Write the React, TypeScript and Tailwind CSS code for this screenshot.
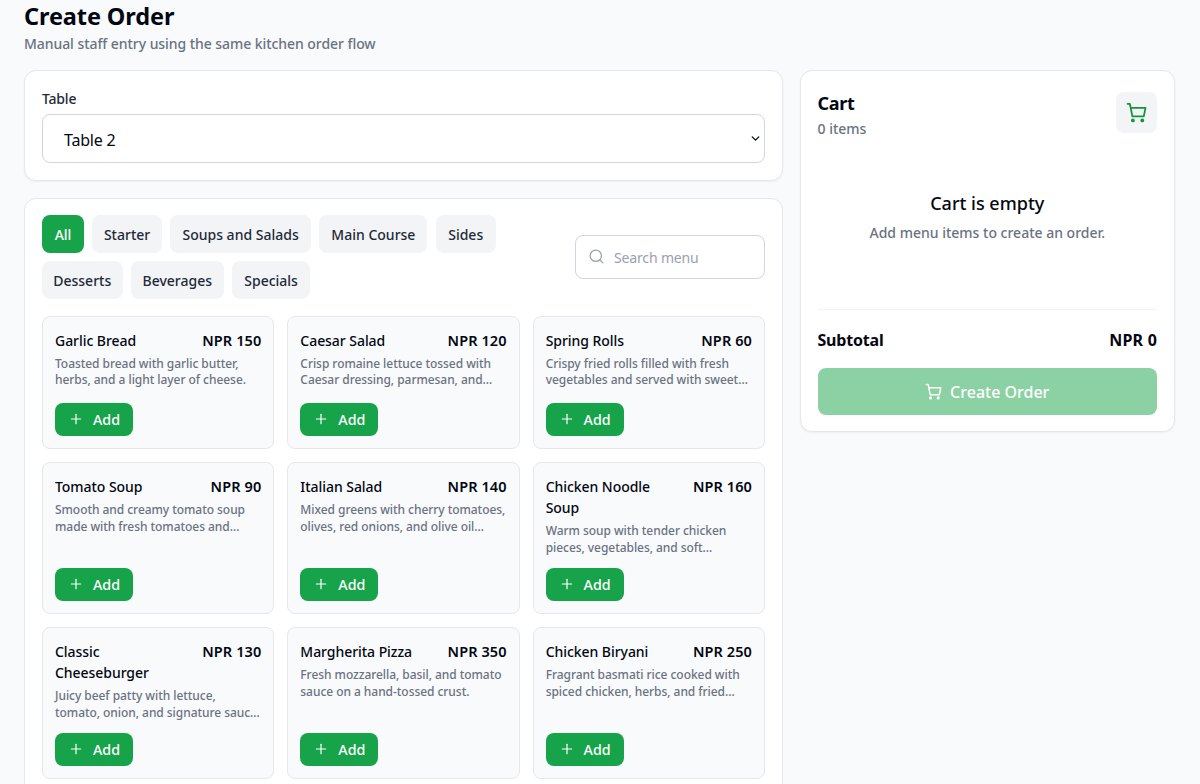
import React, { useState } from 'react';
import { ChevronDown, Plus, Search } from 'lucide-react';

type MenuItem = {
  name: string;
  price: number;
  description: string;
};

const CATEGORIES = [
  { name: 'All', width: 'w-[42px]' },
  { name: 'Starter', width: 'w-[69.5px]' },
  { name: 'Soups and Salads', width: 'w-[141px]' },
  { name: 'Main Course', width: 'w-[108px]' },
  { name: 'Sides', width: 'w-[60px]' },
  { name: 'Desserts', width: 'w-[80.5px]' },
  { name: 'Beverages', width: 'w-[93px]' },
  { name: 'Specials', width: 'w-[78px]' },
];

const MENU: MenuItem[] = [
  { name: 'Garlic Bread', price: 150, description: 'Toasted bread with garlic butter,\nherbs, and a light layer of cheese.' },
  { name: 'Caesar Salad', price: 120, description: 'Crisp romaine lettuce tossed with\nCaesar dressing, parmesan, and…' },
  { name: 'Spring Rolls', price: 60, description: 'Crispy fried rolls filled with fresh\nvegetables and served with sweet…' },
  { name: 'Tomato Soup', price: 90, description: 'Smooth and creamy tomato soup\nmade with fresh tomatoes and…' },
  { name: 'Italian Salad', price: 140, description: 'Mixed greens with cherry tomatoes,\nolives, red onions, and olive oil…' },
  { name: 'Chicken Noodle\nSoup', price: 160, description: 'Warm soup with tender chicken\npieces, vegetables, and soft…' },
  { name: 'Classic\nCheeseburger', price: 130, description: 'Juicy beef patty with lettuce,\ntomato, onion, and signature sauc…' },
  { name: 'Margherita Pizza', price: 350, description: 'Fresh mozzarella, basil, and tomato\nsauce on a hand-tossed crust.' },
  { name: 'Chicken Biryani', price: 250, description: 'Fragrant basmati rice cooked with\nspiced chicken, herbs, and fried…' },
];

const CartIcon: React.FC<{ size: number }> = ({ size }) => (
  <svg width={size} height={size} viewBox="0 0 21 21" fill="none" stroke="currentColor" strokeWidth={1.8} strokeLinejoin="round" strokeLinecap="round">
    <path d="M1.6 1.8h2.2l.9 4h14.8l-1.7 8.6H6.4L4.7 5.8" />
    <circle cx="6.9" cy="18.4" r="1" fill="currentColor" />
    <circle cx="16.3" cy="18.4" r="1" fill="currentColor" />
  </svg>
);

const MenuCard: React.FC<{ item: MenuItem }> = ({ item }) => (
  <div className="flex min-h-[133.5px] flex-col rounded-lg border border-gray-200 bg-gray-50 px-3 pt-[13px] pb-3">
    <div className="flex items-start justify-between whitespace-pre leading-[21px] text-gray-950">
      <h3 className="text-[14px] font-medium tracking-[-0.05px]">{item.name}</h3>
      <span className="text-[14.5px] font-semibold tracking-[0.1px]">NPR {item.price}</span>
    </div>
    <p className="mt-[5px] mb-[11.1px] whitespace-pre text-[12px] font-medium leading-[16.7px] tracking-[-0.05px] text-gray-500">
      {item.description}
    </p>
    <button className="mt-auto flex h-[33.5px] w-[78px] items-center justify-center gap-[9px] rounded-lg bg-[#16a34a] text-[14.3px] font-medium text-white">
      <Plus size={16} strokeWidth={1.8} />
      <span className="pt-px">Add</span>
    </button>
  </div>
);

const App: React.FC = () => {
  const [category, setCategory] = useState('All');

  return (
    <div className="h-[784px] overflow-hidden bg-[#f8fafc] pr-[25px] pl-6 font-['Noto_Sans',sans-serif] text-gray-950">
      {/* Header */}
      <header className="h-[70px]">
        <h1 className="pt-px text-[23.5px] font-bold leading-[30px] tracking-[-0.1px]">Create Order</h1>
        <p className="mt-0.5 text-[14px] font-medium leading-[21px] tracking-[-0.06px] text-gray-500">
          Manual staff entry using the same kitchen order flow
        </p>
      </header>

      <main className="flex items-start gap-[16.5px]">
        <div className="flex w-[759px] flex-col gap-[16.5px]">
          {/* Table picker */}
          <section className="h-[111px] rounded-xl border border-gray-200 bg-white px-[17px] pt-[18px] shadow-xs">
            <div className="-mt-px text-[14px] font-medium leading-[21px] tracking-[-0.2px] text-gray-800">Table</div>
            <div className="mt-[5px] flex h-[49px] items-center justify-between rounded-lg border border-gray-300 pr-0.5 pl-[21px] text-[16px]">
              <span className="pt-[3px] tracking-[-0.2px]">Table 2</span>
              <ChevronDown size={13} strokeWidth={2.4} />
            </div>
          </section>

          {/* Menu */}
          <section className="rounded-xl border border-gray-200 bg-white p-[17px] pt-4">
            <div className="flex items-center justify-between">
              <div className="flex w-[500px] flex-wrap gap-x-[8.3px] gap-y-2">
                {CATEGORIES.map((c) => (
                  <button
                    key={c.name}
                    onClick={() => setCategory(c.name)}
                    className={`h-[38px] whitespace-nowrap rounded-lg pt-px text-[14px] font-medium ${c.width} ${
                      c.name === category ? 'bg-[#16a34a] text-white' : 'bg-gray-100 text-gray-800'
                    }`}
                  >
                    {c.name}
                  </button>
                ))}
              </div>
              <div className="flex h-11 w-[190px] items-center gap-[9px] rounded-lg border border-gray-300 px-3 text-[14px] text-gray-400">
                <Search size={17} strokeWidth={1.8} />
                <span className="pt-0.5 tracking-[-0.15px]">Search menu</span>
              </div>
            </div>

            <div className="mt-[17px] grid grid-cols-3 gap-[13px]">
              {MENU.map((item) => (
                <MenuCard key={item.name} item={item} />
              ))}
            </div>
          </section>
        </div>

        {/* Cart */}
        <aside className="h-[362px] flex-1 rounded-xl border border-gray-200 bg-white px-[17px] shadow-xs">
          <div className="flex h-[73px] items-start justify-between pt-[21px]">
            <div>
              <h2 className="-mt-px text-[18px] font-bold leading-6 tracking-[-0.3px]">Cart</h2>
              <p className="mt-px text-[14px] font-medium leading-[25px] text-gray-500">0 items</p>
            </div>
            <div className="flex size-[41px] items-center justify-center rounded-lg bg-gray-100 text-[#15933f]">
              <CartIcon size={21} />
            </div>
          </div>
          <div className="mt-[46px] h-[119px] text-center">
            <h3 className="text-[18px] font-medium leading-[27px]">Cart is empty</h3>
            <p className="text-[14px] font-medium leading-[31px] text-gray-500">Add menu items to create an order.</p>
          </div>
          <div className="flex h-[59px] justify-between border-t border-gray-100 pt-4 text-[16px] font-bold leading-7">
            <span className="tracking-[-0.2px]">Subtotal</span>
            <span className="tracking-[0.2px]">NPR 0</span>
          </div>
          <button className="flex h-[46.5px] w-full items-center justify-center gap-2 rounded-lg bg-[#8bd1a4] text-[16px] font-medium text-white">
            <CartIcon size={17} />
            <span className="pt-0.5">Create Order</span>
          </button>
        </aside>
      </main>
    </div>
  );
};

export default App;
